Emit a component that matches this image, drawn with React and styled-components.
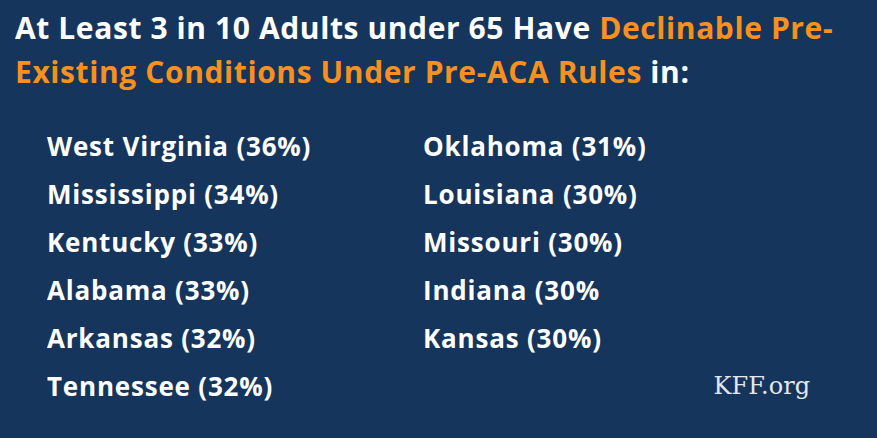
import React from "react";
import styled, { createGlobalStyle } from "styled-components";

const Global = createGlobalStyle`
  html, body { margin: 0; padding: 0; background: #15355c; }
  body { width: 877px; height: 438px; overflow: hidden; }
`;

const Slide = styled.div`
  width: 877px;
  height: 438px;
  box-sizing: border-box;
  background: #15355c;
  font-family: "Open Sans", Lato, sans-serif;
  font-weight: 700;
  color: #ffffff;
  padding: 6px 0 0 15px;
`;

const Title = styled.h1`
  margin: 0;
  font-size: 30px;
  line-height: 44px;
  font-weight: 700;
  letter-spacing: 0.6px;
`;

const Accent = styled.span`
  color: #f7901e;
`;

const List = styled.div`
  display: grid;
  grid-template-columns: 376px 1fr;
  grid-auto-rows: 48px;
  padding: 28px 67px 0 32px;
`;

const Item = styled.div`
  font-size: 26px;
  line-height: 48px;
  letter-spacing: 0.8px;
  white-space: nowrap;
`;

const Credit = styled.div`
  justify-self: end;
  font-family: "DejaVu Serif", Georgia, serif;
  font-weight: 400;
  font-size: 24px;
  line-height: 48px;
  color: #e3e8ee;
`;

const left = [
  "West Virginia (36%)",
  "Mississippi (34%)",
  "Kentucky (33%)",
  "Alabama (33%)",
  "Arkansas (32%)",
  "Tennessee (32%)",
];
const right = [
  "Oklahoma (31%)",
  "Louisiana (30%)",
  "Missouri (30%)",
  "Indiana (30%",
  "Kansas (30%)",
];

export default function App() {
  const cells = [];
  for (let i = 0; i < 6; i++) {
    cells.push(<Item key={"l" + i}>{left[i]}</Item>);
    if (right[i]) cells.push(<Item key={"r" + i}>{right[i]}</Item>);
    else cells.push(<Credit key="credit">KFF.org</Credit>);
  }
  return (
    <>
      <Global />
      <Slide>
        <Title>
          At Least 3 in 10 Adults under 65 Have <Accent>Declinable Pre-</Accent>
          <br />
          <Accent>Existing Conditions Under Pre-ACA Rules</Accent> in:
        </Title>
        <List>{cells}</List>
      </Slide>
    </>
  );
}
